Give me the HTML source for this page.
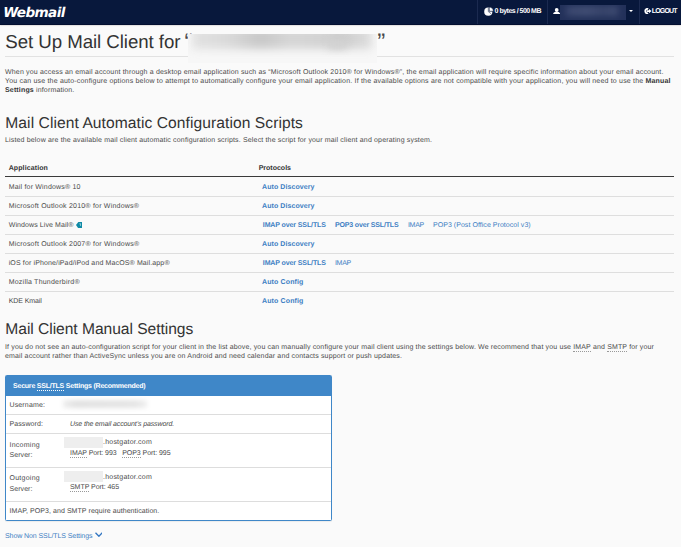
<!DOCTYPE html>
<html lang="en">
<head>
<meta charset="utf-8">
<title>Set Up Mail Client</title>
<style>
html,body{margin:0;padding:0;}
body{width:681px;height:547px;overflow:hidden;background:#fafafa;position:relative;
  font-family:"Liberation Sans","DejaVu Sans",sans-serif;color:#444;font-size:7px;text-rendering:geometricPrecision;}
.t{position:absolute;white-space:nowrap;line-height:1;margin:0;font-weight:normal;transform-origin:0 50%;}
b{font-weight:bold;color:#333;}
#hdr{position:absolute;left:0;top:0;width:681px;height:24.8px;background:linear-gradient(#08183c,#08183c 23.6px,#030f30 24.2px);box-shadow:0 0.5px 1.5px rgba(60,40,40,0.3);}
.sep{position:absolute;top:0;width:1px;height:24px;background:#1b2a50;}
.hl{position:absolute;left:5px;width:668.5px;height:1px;}
.p{color:#4a4a4a;}
.lnk{color:#3d7ec3;text-decoration:none;display:block;}
abbr{text-decoration:none;border-bottom:1px dotted #999;}
abbr.w{border-bottom-color:#fff;}
#panel{position:absolute;left:5px;top:375px;width:325.2px;height:144px;border:1px solid #3f87c8;background:#fff;border-radius:1.5px;box-shadow:0 0.5px 1px rgba(0,0,0,0.06);}
#ph{position:absolute;left:0;top:0;width:325.2px;height:20px;background:#3f87c8;}
.pl{position:absolute;left:0;width:325.2px;height:1px;background:#ddd;}
.blur{position:absolute;}
</style>
</head>
<body>
<div id="hdr">
<div class="t" id="logo" style="left:3.2px;top:6.89px;font-size:13.6px;letter-spacing:-0.576px;font-family:'DejaVu Sans',sans-serif;font-weight:bold;font-style:italic;color:#fff;">Webmail</div>
<div class="sep" style="left:477.3px"></div>
<div class="sep" style="left:547px"></div>
<div class="sep" style="left:639.2px"></div>
<svg style="position:absolute;left:484px;top:6.5px" width="10" height="9" viewBox="0 0 10 9"><circle cx="4.3" cy="4.7" r="4.1" fill="#fff"/><path d="M5.2 0 A4.3 4.3 0 0 1 9.5 4.3 L5.2 4.3 Z" fill="#fff" stroke="#09193d" stroke-width="0.7"/><path d="M4.3 4.7 L4.3 1 M4.3 4.7 L7.2 6.8" stroke="#09193d" stroke-width="0.5" fill="none"/></svg>
<div class="t" id="quota" style="left:494.6px;top:8.00px;font-size:7px;letter-spacing:-0.504px;color:#fff;font-weight:bold;">0 bytes / 500 MB</div>
<svg style="position:absolute;left:552.8px;top:7.6px" width="7.4" height="6.8" viewBox="0 0 7.4 6.8"><ellipse cx="3.7" cy="2" rx="1.9" ry="2" fill="#fff"/><path d="M0 6.8 Q0 3.8 3.7 3.8 Q7.4 3.8 7.4 6.8 Z" fill="#fff"/></svg>
<div class="blur" style="left:560px;top:4.8px;width:66px;height:15px;overflow:hidden;background:#23315a;"><div style="position:absolute;left:6px;top:1px;width:52px;height:10px;background:linear-gradient(90deg,#3a476e,#424f75 40%,#38456b 70%,#3f4c72);filter:blur(3px);"></div></div>
<div style="position:absolute;left:629.4px;top:10.2px;width:0;height:0;border-left:2px solid transparent;border-right:2px solid transparent;border-top:2px solid #fff;"></div>
<svg style="position:absolute;left:644px;top:8.2px" width="7.5" height="6.2" viewBox="0 0 7.5 6.2"><path d="M4.2 0.9 A2.3 2.3 0 1 0 4.2 5.3" fill="none" stroke="#fff" stroke-width="1.8"/><path d="M2.6 2.3 H5 V0.9 L7.5 3.1 L5 5.3 V3.9 H2.6 Z" fill="#fff"/></svg>
<div class="t" id="logout" style="left:651.8px;top:8.00px;font-size:7px;letter-spacing:-0.826px;color:#fff;font-weight:bold;">LOGOUT</div>
</div>
<h1 class="t" id="h1" style="left:5.3px;top:32.77px;font-size:18.7px;letter-spacing:-0.062px;color:#333;">Set Up Mail Client for</h1>
<div class="t" id="h1o" style="left:184.4px;top:31.28px;font-size:24px;color:#484848;">“</div>
<div class="blur" style="left:187.7px;top:33.5px;width:189px;height:29px;background:#f7f7f7;overflow:hidden;"><div style="position:absolute;left:4px;top:-6px;width:180px;height:21px;background:linear-gradient(90deg,#e2e2e2,#dadada 20%,#c8c8c8 38%,#d6d6d6 55%,#d2d2d2 75%,#cccccc 82%,#dedede);filter:blur(4.5px);"></div><div style="position:absolute;left:140px;top:6px;width:18px;height:9px;background:#d2d2d2;filter:blur(3.5px);"></div></div>
<div class="t" id="h1q" style="left:377.2px;top:31.28px;font-size:24px;color:#484848;">”</div>
<div class="hl" style="top:56.3px;background:#e2e2e2;width:183px"></div>
<div class="hl" style="top:56.3px;background:#e2e2e2;left:377px;width:296.5px"></div>
<div class="t p" id="p1" style="left:5px;top:69.00px;font-size:7px;letter-spacing:0.171px;">When you access an email account through a desktop email application such as “Microsoft Outlook 2010® for Windows®”, the email application will require specific information about your email account.</div>
<div class="t p" id="p2" style="left:5px;top:78.00px;font-size:7px;letter-spacing:0.189px;">You can use the auto-configure options below to attempt to automatically configure your email application. If the available options are not compatible with your application, you will need to use the <b>Manual</b></div>
<div class="t p" id="p3" style="left:5px;top:87.00px;font-size:7px;letter-spacing:0.159px;"><b>Settings</b> information.</div>
<h2 class="t" id="h2a" style="left:5.3px;top:115.79px;font-size:15.6px;letter-spacing:0.070px;color:#333;">Mail Client Automatic Configuration Scripts</h2>
<div class="t p" id="p4" style="left:5px;top:137.00px;font-size:7px;letter-spacing:0.162px;">Listed below are the available mail client automatic configuration scripts. Select the script for your mail client and operating system.</div>
<div class="t" id="th1" style="left:8.7px;top:165.00px;font-size:7px;letter-spacing:0.107px;font-weight:bold;color:#333;">Application</div>
<div class="t" id="th2" style="left:258.7px;top:165.00px;font-size:7px;letter-spacing:0.000px;font-weight:bold;color:#333;">Protocols</div>
<div class="hl" style="top:176.4px;background:#3a3a3a;"></div>
<div class="t p" id="r0" style="left:8.7px;top:184.00px;font-size:7px;letter-spacing:0.191px;">Mail for Windows® 10</div>
<a class="t lnk" id="r0l0" style="left:262px;top:184.00px;font-size:7px;letter-spacing:0.089px;font-weight:bold;">Auto Discovery</a>
<div class="hl" style="top:195.7px;background:#dedede;"></div>
<div class="t p" id="r1" style="left:8.7px;top:203.00px;font-size:7px;letter-spacing:0.213px;">Microsoft Outlook 2010® for Windows®</div>
<a class="t lnk" id="r1l0" style="left:262px;top:203.00px;font-size:7px;letter-spacing:0.089px;font-weight:bold;">Auto Discovery</a>
<div class="hl" style="top:214.7px;background:#dedede;"></div>
<div class="t p" id="r2" style="left:8.7px;top:222.00px;font-size:7px;letter-spacing:0.093px;">Windows Live Mail®</div>
<svg style="position:absolute;left:76px;top:221.8px" width="6.3" height="6.3" viewBox="0 0 6.3 6.3"><path d="M0 3 L2.3 0 H6.3 V6.3 H2.3 Z" fill="#0f8aa6"/><path d="M3.4 1.6 H4.9 V4 H4.3 V2.2 H3.4 Z" fill="#bfe6ee"/></svg>
<a class="t lnk" id="r2l0" style="left:262.8px;top:222.00px;font-size:7px;letter-spacing:-0.108px;font-weight:bold;">IMAP over SSL/TLS</a>
<a class="t lnk" id="r2l1" style="left:334.9px;top:222.00px;font-size:7px;letter-spacing:-0.149px;font-weight:bold;">POP3 over SSL/TLS</a>
<a class="t lnk" id="r2l2" style="left:407.9px;top:222.00px;font-size:7px;letter-spacing:-0.256px;">IMAP</a>
<a class="t lnk" id="r2l3" style="left:433px;top:222.00px;font-size:7px;letter-spacing:0.045px;">POP3 (Post Office Protocol v3)</a>
<div class="hl" style="top:233.7px;background:#dedede;"></div>
<div class="t p" id="r3" style="left:8.7px;top:241.00px;font-size:7px;letter-spacing:0.218px;">Microsoft Outlook 2007® for Windows®</div>
<a class="t lnk" id="r3l0" style="left:262px;top:241.00px;font-size:7px;letter-spacing:0.089px;font-weight:bold;">Auto Discovery</a>
<div class="hl" style="top:252.7px;background:#dedede;"></div>
<div class="t p" id="r4" style="left:8.7px;top:260.00px;font-size:7px;letter-spacing:0.132px;">iOS for iPhone/iPad/iPod and MacOS® Mail.app®</div>
<a class="t lnk" id="r4l0" style="left:262.8px;top:260.00px;font-size:7px;letter-spacing:-0.108px;font-weight:bold;">IMAP over SSL/TLS</a>
<a class="t lnk" id="r4l1" style="left:334.9px;top:260.00px;font-size:7px;letter-spacing:-0.256px;">IMAP</a>
<div class="hl" style="top:271.7px;background:#dedede;"></div>
<div class="t p" id="r5" style="left:8.7px;top:279.00px;font-size:7px;letter-spacing:0.229px;">Mozilla Thunderbird®</div>
<a class="t lnk" id="r5l0" style="left:262px;top:279.00px;font-size:7px;letter-spacing:0.132px;font-weight:bold;">Auto Config</a>
<div class="hl" style="top:290.7px;background:#dedede;"></div>
<div class="t p" id="r6" style="left:8.7px;top:298.00px;font-size:7px;letter-spacing:-0.083px;">KDE Kmail</div>
<a class="t lnk" id="r6l0" style="left:262px;top:298.00px;font-size:7px;letter-spacing:0.132px;font-weight:bold;">Auto Config</a>
<h2 class="t" id="h2b" style="left:5.3px;top:321.79px;font-size:15.6px;letter-spacing:-0.039px;color:#333;">Mail Client Manual Settings</h2>
<div class="t p" id="p5" style="left:5px;top:344.00px;font-size:7px;letter-spacing:0.148px;">If you do not see an auto-configuration script for your client in the list above, you can manually configure your mail client using the settings below. We recommend that you use <abbr>IMAP</abbr> and <abbr>SMTP</abbr> for your</div>
<div class="t p" id="p6" style="left:5px;top:353.00px;font-size:7px;letter-spacing:0.153px;">email account rather than ActiveSync unless you are on Android and need calendar and contacts support or push updates.</div>
<div id="panel"><div id="ph"></div>
<div class="pl" style="top:37.7px"></div>
<div class="pl" style="top:56.9px"></div>
<div class="pl" style="top:90.9px"></div>
<div class="pl" style="top:124.9px"></div>
</div>
<div class="blur" style="left:63px;top:399.5px;width:84px;height:8.5px;background:linear-gradient(90deg,#eeeeee,#e2e2e2 15%,#e5e5e5 85%,#f0f0f0);filter:blur(2.2px);"></div>
<div class="blur" style="left:64px;top:436.6px;width:39px;height:11.6px;background:#eeeeee;filter:blur(0.5px);"></div>
<div class="blur" style="left:64px;top:470.6px;width:39px;height:11.6px;background:#eeeeee;filter:blur(0.5px);"></div>
<div class="t" id="pht" style="left:13px;top:383.00px;font-size:7px;letter-spacing:-0.215px;color:#fff;font-weight:bold;">Secure <abbr class="w">SSL/TLS</abbr> Settings (Recommended)</div>
<div class="t p" id="u1" style="left:9.5px;top:402.00px;font-size:7px;letter-spacing:0.141px;">Username:</div>
<div class="t p" id="u2" style="left:9.5px;top:421.00px;font-size:7px;letter-spacing:0.090px;">Password:</div>
<div class="t p" id="pw" style="left:70px;top:421.00px;font-size:7px;letter-spacing:-0.123px;font-style:italic;">Use the email account’s password.</div>
<div class="t p" id="in1" style="left:9.5px;top:442.00px;font-size:7px;letter-spacing:0.262px;">Incoming</div>
<div class="t p" id="in2" style="left:9.5px;top:452.00px;font-size:7px;letter-spacing:0.062px;">Server:</div>
<div class="t p" id="hg1" style="left:103px;top:439.00px;font-size:7px;letter-spacing:0.220px;">.hostgator.com</div>
<div class="t p" id="ports1" style="left:70px;top:450.00px;font-size:7px;letter-spacing:-0.056px;"><abbr>IMAP</abbr> Port: 993 &nbsp;&nbsp;<abbr>POP3</abbr> Port: 995</div>
<div class="t p" id="out1" style="left:9.5px;top:475.00px;font-size:7px;letter-spacing:0.260px;">Outgoing</div>
<div class="t p" id="out2" style="left:9.5px;top:486.00px;font-size:7px;letter-spacing:0.062px;">Server:</div>
<div class="t p" id="hg2" style="left:103px;top:474.00px;font-size:7px;letter-spacing:0.220px;">.hostgator.com</div>
<div class="t p" id="ports2" style="left:70px;top:484.00px;font-size:7px;letter-spacing:-0.049px;"><abbr>SMTP</abbr> Port: 465</div>
<div class="t p" id="auth" style="left:9.5px;top:508.00px;font-size:7px;letter-spacing:0.068px;">IMAP, POP3, and SMTP require authentication.</div>
<a class="t lnk" id="show" style="left:5px;top:533.00px;font-size:7px;letter-spacing:-0.084px;">Show Non SSL/TLS Settings</a>
<svg style="position:absolute;left:94.6px;top:532.1px" width="7.8" height="5.4" viewBox="0 0 7.8 5.4"><path d="M0.5 0.7 L3.9 4.3 L7.3 0.7" fill="none" stroke="#3377c2" stroke-width="1.3"/></svg>
</body>
</html>
